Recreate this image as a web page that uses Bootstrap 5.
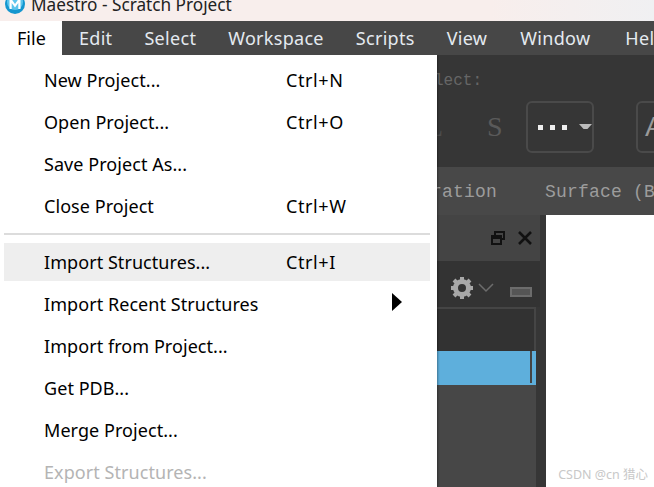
<!DOCTYPE html>
<html lang="en"><head><meta charset="utf-8"><title>Maestro</title>
<link href="https://cdn.jsdelivr.net/npm/bootstrap@5.3.0/dist/css/bootstrap.min.css" rel="stylesheet">
<style>
html,body{width:654px;height:487px;overflow:hidden;background:#fff}
body{font-family:"Noto Sans","Open Sans",sans-serif;font-size:18px;line-height:1;color:#000}
.titlebar{height:21px;background:linear-gradient(90deg,#f8eeec 0%,#f8eeec 75%,#f0f0f2 100%);padding-left:5px;overflow:hidden}
.titlebar span{font-size:17.2px;line-height:17px;white-space:nowrap;color:#222;margin-top:-4px;margin-left:-2px}
.logo{width:20px;height:20px;margin-top:-6px;flex:none}
.menubar{height:34px;background:#474747;color:#e4eaf0;white-space:nowrap;overflow:hidden;letter-spacing:.3px}
.menubar span{display:block;padding:0 16px;line-height:34px;flex:none}
.menubar .on{background:#fff;color:#000;width:62px;padding-left:17px;margin-right:1px;letter-spacing:0}
.menubar .pad-win{margin-left:1px;margin-right:3px}
.stage{position:relative;height:432px;overflow:hidden}
.toolzone{height:112px;background:#363636;padding-left:437px;position:relative}
.mono{font-family:"Liberation Mono",monospace}
.lect{color:#666;font-size:16px;line-height:20px;padding-top:16px;height:46px;margin-left:-3px}
.sglyph{font-family:"Liberation Serif",serif;font-size:28px;color:#5a5a5a;width:89px;line-height:52px;flex:none;display:flex;overflow:hidden}
.sglyph em{font-style:normal;flex:none;color:#4c4c4c;margin-left:-11px;width:61px}
.toolbtn{height:52px;width:68px;border:2px solid #4a4a4a;border-radius:6px;flex:none}
.toolbtn.second{margin-left:42px;color:#9a9a9a;font-family:"Liberation Sans",sans-serif;font-size:28px;padding-left:7px;line-height:48px}
.dots{gap:7px;margin-left:10px}
.dots i{display:block;width:5px;height:5px;background:#eee}
.caret-mini{width:13px;height:5px;background:#bbb;clip-path:polygon(0 0,100% 0,65% 100%,35% 100%);margin-left:12px;margin-top:-1px}
.tabzone{height:48px;background:#484848;color:#9c9c9c;line-height:51px;padding-left:431px;white-space:nowrap;overflow:hidden;letter-spacing:.2px}
.tabzone b{font-weight:400;margin-left:48px}
.lower{height:272px}
.panel{width:546px;background:#363636;flex:none}
.paper{flex:1;background:#fff;position:relative}
.phead{height:46px;background:#444;padding-right:8px;gap:12px;margin-right:6px}
.ptools{height:46px;background:#333;padding:8px 8px 0 0;margin-right:6px}
.ptools .slot{margin-top:8px}
.plist{height:44px;background:#323232;border-top:2px solid #454545;border-right:2px solid #454545;margin-right:10px}
.psel{height:34px;background:#5eafdc;margin-right:10px;padding-right:4px}
.psel i{display:block;width:2px;background:#444;height:32px;margin-left:auto}
.prest{height:120px;background:#474747;margin-right:10px}
.mark-text{position:absolute;right:6px;bottom:5px;font-size:12.5px;line-height:14px;color:#c8c8c8;font-family:"Noto Sans","Noto Sans CJK SC",sans-serif;white-space:nowrap}
.filemenu{position:absolute;left:0;top:0;width:437px;height:432px;background:#fff;margin:0;padding:4px 7px 0 4px;border:0;border-radius:0;display:block;z-index:5;box-shadow:1px 0 2px rgba(0,0,0,.35);list-style:none;overflow:hidden}
.mitem{height:42px;line-height:42px;padding:0 0 0 40px;color:#000;display:flex;white-space:nowrap;position:relative;letter-spacing:.06px}
.mitem .nm{width:242px}
.mitem .keys{letter-spacing:.6px}
.mitem.hov{background:#eee;height:38px;line-height:38px;margin-bottom:2px}
.mitem.off{color:#b4b4b4}
.sep{height:2px;background:#dcdcdc;margin:6px 0 8px}
.arrow{position:absolute;right:28px;top:10px;width:0;height:0;border-left:10px solid #000;border-top:9px solid transparent;border-bottom:9px solid transparent}
</style></head>
<body>
<div class="titlebar d-flex align-items-start gap-2">
<svg class="logo" viewBox="0 0 20 20"><circle cx="10" cy="10" r="10" fill="#1596cf"/><circle cx="10" cy="8" r="8" fill="#5cc4ec"/><path d="M4.500 15V5h2L10 10l3.500-5h2v10h-2.200V9l-3.300 4.500L6.700 9v6z" fill="#fff"/></svg>
<span>Maestro - Scratch Project</span>
</div>
<nav class="menubar d-flex">
<span class="on">File</span><span>Edit</span><span>Select</span><span>Workspace</span><span>Scripts</span><span>View</span><span class="pad-win">Window</span><span>Help</span>
</nav>
<div class="stage">
<div class="toolzone">
<div class="lect mono">lect:</div>
<div class="d-flex">
<div class="sglyph"><em>L</em>S</div>
<div class="toolbtn d-flex align-items-center"><div class="dots d-flex"><i></i><i></i><i></i></div><div class="caret-mini"></div></div>
<div class="toolbtn second">A</div>
</div>
</div>
<div class="tabzone mono">ration<b>Surface (B</b></div>
<div class="lower d-flex">
<div class="panel">
<div class="phead d-flex justify-content-end align-items-center">
<svg width="16" height="16" viewBox="0 0 16 16" fill="none" stroke="#111" stroke-width="2"><path d="M5 5V2h9v7h-3"/><rect x="2" y="6" width="9" height="8"/><path d="M2 8h9"/></svg>
<svg width="14" height="14" viewBox="0 0 14 14" fill="none" stroke="#111" stroke-width="2.600"><path d="M1 1l12 12M13 1L1 13"/></svg>
</div>
<div class="ptools d-flex justify-content-end align-items-center">
<svg width="24" height="24" viewBox="0 0 24 24"><circle cx="12" cy="12" r="6.500" fill="none" stroke="#a8a8a8" stroke-width="5"/><g stroke="#a8a8a8" stroke-width="4"><path d="M12 1v4M12 19v4M1 12h4M19 12h4M4 4l3 3M17 17l3 3M20 4l-3 3M7 17l-3 3"/></g></svg>
<svg class="ms-1" width="16" height="10" viewBox="0 0 16 10" fill="none" stroke="#6c6c6c" stroke-width="1.500"><path d="M1 1l7 7 7-7"/></svg>
<svg class="ms-3 slot" width="22" height="10" viewBox="0 0 22 10" fill="#555" stroke="#6c6c6c" stroke-width="2"><rect x="1" y="1" width="20" height="8"/></svg>
</div>
<div class="plist"></div>
<div class="psel d-flex"><i></i></div>
<div class="prest"></div>
</div>
<div class="paper"><div class="mark-text">CSDN @cn 猎心</div></div>
</div>
<ul class="filemenu">
<li class="mitem"><span class="nm">New Project...</span><span class="keys">Ctrl+N</span></li>
<li class="mitem"><span class="nm">Open Project...</span><span class="keys">Ctrl+O</span></li>
<li class="mitem"><span class="nm">Save Project As...</span></li>
<li class="mitem"><span class="nm">Close Project</span><span class="keys">Ctrl+W</span></li>
<li class="sep"></li>
<li class="mitem hov"><span class="nm">Import Structures...</span><span class="keys">Ctrl+I</span></li>
<li class="mitem"><span class="nm">Import Recent Structures</span><span class="arrow"></span></li>
<li class="mitem"><span class="nm">Import from Project...</span></li>
<li class="mitem"><span class="nm">Get PDB...</span></li>
<li class="mitem"><span class="nm">Merge Project...</span></li>
<li class="mitem off"><span class="nm">Export Structures...</span></li>
</ul>
</div>
<script src="https://cdn.jsdelivr.net/npm/bootstrap@5.3.0/dist/js/bootstrap.bundle.min.js"></script>
</body></html>
